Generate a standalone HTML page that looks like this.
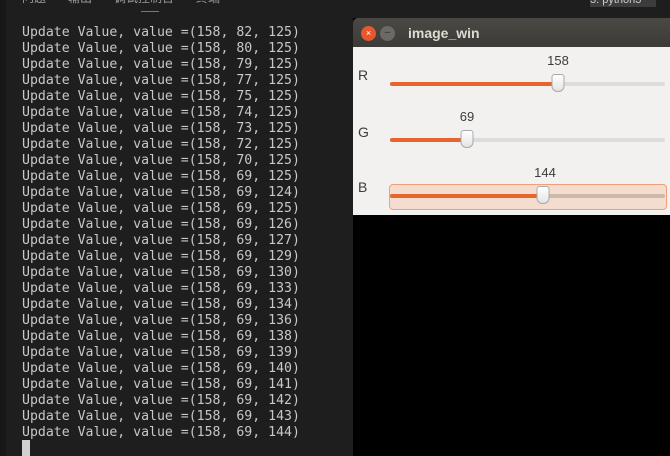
<!DOCTYPE html>
<html><head><meta charset="utf-8"><style>
body{margin:0;width:670px;height:456px;background:#1e1e1e;position:relative;overflow:hidden;font-family:"Liberation Sans","Noto Sans CJK SC",sans-serif}
.strip{position:absolute;left:0;top:0;width:6px;height:456px;background:#181818}
.tabs{position:absolute;top:-11px;left:22px;color:#9a9a9a;font-size:12px;white-space:nowrap}
.tabs span{margin-right:22px}
.ul{position:absolute;left:141px;top:11px;width:18px;height:1px;background:#777}
.dd{position:absolute;left:590px;top:0;width:66px;height:7px;background:#3c3c3c;color:#ccc;font-size:11px;line-height:0;overflow:hidden}
pre{position:absolute;left:22px;top:25px;margin:0;font-family:"DejaVu Sans Mono",monospace;font-size:13.2px;line-height:16px;color:#c8c8c8}
.cur{position:absolute;left:22px;top:440px;width:8px;height:16px;background:#d0d0d0}
.win{position:absolute;left:353px;top:18px;width:317px;height:438px;background:#000}
.tb{height:29px;background:linear-gradient(#4a4944,#3c3b37);border-radius:5px 0 0 0;position:relative}
.tb .t{position:absolute;left:55px;top:7px;color:#dfdbd2;font-weight:bold;font-size:14px}
.c{position:absolute;top:8px;width:15px;height:15px;border-radius:50%}
.cnt{position:absolute;top:29px;left:0;width:317px;height:168px;background:#f2f1f0}
.lbl{position:absolute;left:5px;font-size:14px;color:#3c3c3c}
.val{position:absolute;font-size:13px;color:#3c3c3c;transform:translateX(-50%)}
.tr{position:absolute;left:37px;width:275px;height:4px;background:#dcdcdc;border-radius:2px}
.fill{position:absolute;left:0;top:0;height:4px;background:#e7642f;border-radius:2px}
.th{position:absolute;top:-8px;width:11px;height:16px;background:linear-gradient(#fff,#e4e4e4);border:1px solid #aaa;border-radius:3px 3px 6px 6px;transform:translateX(-50%)}
.hl{position:absolute;left:36px;top:137px;width:276px;height:24px;background:#f4dccf;border:1px solid #f0a07a;border-radius:4px}
</style></head><body>
<div class="strip"></div>
<div class="tabs"><span>问题</span><span>输出</span><span>调试控制台</span><span>终端</span></div>
<div class="ul"></div>
<div class="dd">3: python3</div>
<pre>Update Value, value =(158, 82, 125)
Update Value, value =(158, 80, 125)
Update Value, value =(158, 79, 125)
Update Value, value =(158, 77, 125)
Update Value, value =(158, 75, 125)
Update Value, value =(158, 74, 125)
Update Value, value =(158, 73, 125)
Update Value, value =(158, 72, 125)
Update Value, value =(158, 70, 125)
Update Value, value =(158, 69, 125)
Update Value, value =(158, 69, 124)
Update Value, value =(158, 69, 125)
Update Value, value =(158, 69, 126)
Update Value, value =(158, 69, 127)
Update Value, value =(158, 69, 129)
Update Value, value =(158, 69, 130)
Update Value, value =(158, 69, 133)
Update Value, value =(158, 69, 134)
Update Value, value =(158, 69, 136)
Update Value, value =(158, 69, 138)
Update Value, value =(158, 69, 139)
Update Value, value =(158, 69, 140)
Update Value, value =(158, 69, 141)
Update Value, value =(158, 69, 142)
Update Value, value =(158, 69, 143)
Update Value, value =(158, 69, 144)</pre>
<div class="cur"></div>
<div class="win">
<div class="tb"><div class="c" style="left:8px;background:#e8572c;color:#fff;font-size:9px;text-align:center;line-height:15px">×</div><div class="c" style="left:27px;background:#6a6964;color:#333;font-size:10px;text-align:center;line-height:14px">–</div><div class="t">image_win</div></div>
<div class="cnt">
<div class="lbl" style="top:20px">R</div>
<div class="val" style="left:205px;top:6px">158</div>
<div class="tr" style="top:35px"><div class="fill" style="width:168px"></div><div class="th" style="left:168px"></div></div>
<div class="lbl" style="top:77px">G</div>
<div class="val" style="left:114px;top:62px">69</div>
<div class="tr" style="top:91px"><div class="fill" style="width:77px"></div><div class="th" style="left:77px"></div></div>
<div class="hl"></div>
<div class="lbl" style="top:132px">B</div>
<div class="val" style="left:192px;top:118px">144</div>
<div class="tr" style="top:147px;background:#cdb8ac"><div class="fill" style="width:153px"></div><div class="th" style="left:153px"></div></div>
</div>
</div>
</body></html>
